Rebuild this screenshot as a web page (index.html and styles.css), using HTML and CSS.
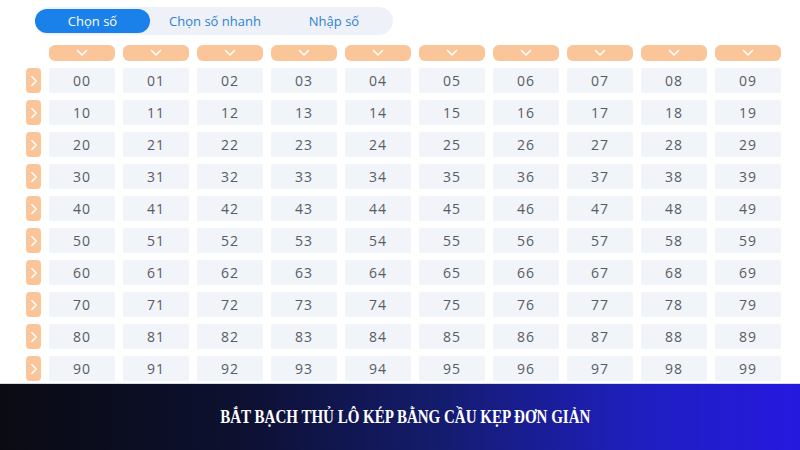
FILE: index.html
```html
<!DOCTYPE html>
<html lang="vi">
<head>
<meta charset="utf-8">
<title>Bắt bạch thủ lô kép</title>
<link rel="stylesheet" href="styles.css">
</head>
<body>
<main class="picker">
  <nav class="tabs">
    <button class="tab tab-active">Chọn số</button>
    <button class="tab">Chọn số nhanh</button>
    <button class="tab">Nhập số</button>
  </nav>

  <section class="board" id="board">
    <span class="corner"></span>
  </section>
</main>

<footer class="banner">
  <h1 class="banner-title">BẮT BẠCH THỦ LÔ KÉP BẰNG CẦU KẸP ĐƠN GIẢN</h1>
</footer>

<script src="board.js"></script>
</body>
</html>
```

FILE: board.js
```js
// Builds the 10x10 number board: a header row of column toggles,
// then ten rows each led by a row toggle.
(function () {
  var board = document.getElementById('board');
  var down = '<svg viewBox="0 0 12 8" width="12" height="8"><path d="M1.5 1.5 L6 6 L10.5 1.5" fill="none" stroke="#fff" stroke-width="1.6" stroke-linecap="round" stroke-linejoin="round"/></svg>';
  var right = '<svg viewBox="0 0 8 12" width="8" height="12"><path d="M1.8 1.5 L6.2 6 L1.8 10.5" fill="none" stroke="#fff" stroke-width="1.6" stroke-linecap="round" stroke-linejoin="round"/></svg>';
  var html = '';
  for (var c = 0; c < 10; c++) {
    html += '<button class="col-toggle">' + down + '</button>';
  }
  for (var r = 0; r < 10; r++) {
    html += '<button class="row-toggle">' + right + '</button>';
    for (var k = 0; k < 10; k++) {
      html += '<span class="cell">' + r + k + '</span>';
    }
  }
  board.insertAdjacentHTML('beforeend', html);
})();
```

FILE: styles.css
```css
* {
  box-sizing: border-box;
}

html, body {
  margin: 0;
  padding: 0;
  background: #ffffff;
  width: 800px;
  height: 450px;
  overflow: hidden;
}

body {
  font-family: "Open Sans", "Noto Sans", sans-serif;
  display: flex;
  flex-direction: column;
}

.picker {
  flex: 1;
  padding: 7px 0 0 26px;
}

.tabs {
  display: flex;
  width: 358px;
  height: 28px;
  margin-left: 9px;
  padding: 2px 0;
  border-radius: 14px;
  background: #eef2f8;
}

.tab {
  border: 0;
  background: transparent;
  font: inherit;
  font-size: 13px;
  color: #2f7fd0;
  border-radius: 12px;
  padding: 0;
  cursor: pointer;
}

.tab:nth-child(1) { width: 115px; }
.tab:nth-child(2) { width: 130px; }
.tab:nth-child(3) { width: 108px; }

.tab-active {
  background: #1a80ea;
  color: #ffffff;
}

.board {
  display: grid;
  grid-template-columns: 15px repeat(10, 66px);
  grid-template-rows: 16px repeat(10, 25px);
  column-gap: 8px;
  row-gap: 7px;
  margin-top: 10px;
}

.col-toggle,
.row-toggle {
  border: 0;
  padding: 0;
  background: #fbc59a;
  display: flex;
  align-items: center;
  justify-content: center;
  cursor: pointer;
}

.col-toggle {
  border-radius: 6px;
}

.row-toggle {
  border-radius: 4px;
}

.cell {
  display: flex;
  align-items: center;
  justify-content: center;
  background: #f1f4f9;
  border-radius: 2px;
  font-size: 14px;
  letter-spacing: 1px;
  color: #585c62;
}

.banner {
  height: 67px;
  flex: none;
  display: flex;
  align-items: center;
  justify-content: center;
  background: linear-gradient(90deg, #0a0b12 0%, #0d1030 30%, #141c6e 55%, #1f1fc0 80%, #2619e0 100%);
  border-top: 1px solid #d8dbe2;
}

.banner-title {
  margin: 0 0 0 10px;
  font-family: "Liberation Serif", serif;
  font-weight: 700;
  font-size: 19px;
  color: #ffffff;
  letter-spacing: 0;
  transform: scaleX(0.79);
  white-space: nowrap;
}
```
